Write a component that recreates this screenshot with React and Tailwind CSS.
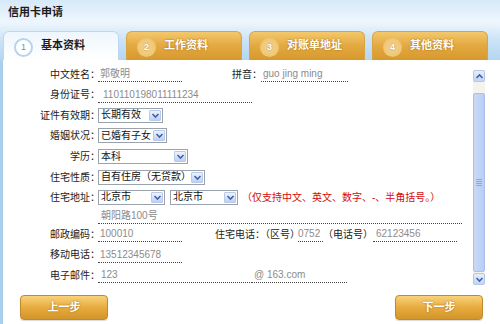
import React from 'react';

const tabs = [
  { no: '1', label: '基本资料' },
  { no: '2', label: '工作资料' },
  { no: '3', label: '对账单地址' },
  { no: '4', label: '其他资料' },
];

const Chevron = ({ up = false }) => (
  <svg width="9" height="7" viewBox="0 0 9 7">
    <polyline
      points={up ? '1.5,5 4.5,2 7.5,5' : '1.5,2 4.5,5 7.5,2'}
      fill="none"
      stroke="#3f63a8"
      strokeWidth="1.6"
    />
  </svg>
);

const Select = ({ w, value }) => (
  <div className={`relative flex h-[15px] items-center border border-[#9aa3ad] bg-white pl-[2px] text-[10px] leading-none text-[#111] ${w}`}>
    {value}
    <span className="absolute right-[1px] top-[1px] flex h-[11px] w-[12px] items-center justify-center rounded-[1px] border border-[#b9c9ea] bg-gradient-to-b from-[#eef3fd] to-[#bfd0f4]">
      <Chevron />
    </span>
  </div>
);

const Field = ({ w, value, className = '' }) => (
  <div className={`h-[16px] border-b border-dotted border-[#444] text-[10px] leading-[16px] text-[#8c8c8c] ${w} ${className}`}>
    {value}
  </div>
);

const Row = ({ h, label, children }) => (
  <div className={`flex items-center ${h}`}>
    <div className="w-[97px] text-right text-[10px] text-[#222]">{label}</div>
    <div className="-ml-[2px] flex items-center">{children}</div>
  </div>
);

const Button = ({ children }) => (
  <button className="flex h-[25px] w-[88px] items-center justify-center rounded-[4px] border border-[#c08a2a] bg-gradient-to-b from-[#f9d27a] via-[#e7ab3d] to-[#d2952b] text-[11px] font-bold text-white shadow-[0_1px_1px_rgba(0,0,0,0.15)] [text-shadow:0_0_2px_#a0680f]">
    {children}
  </button>
);

export default function App() {
  return (
    <div className="flex h-[324px] w-[500px] flex-col overflow-hidden bg-[linear-gradient(180deg,#d6e9f8_0px,#eef6fd_22px,#cbe3f7_40px,#b5d5f1_60px)] font-['Liberation_Sans','Noto_Sans_CJK_SC',sans-serif]">
      {/* Title */}
      <div className="h-[31px] pl-[8px] pt-[5px] text-[11px] font-bold leading-[14px] text-[#1a1a1a]">
        信用卡申请
      </div>

      {/* Tabs */}
      <div className="flex h-[29px] gap-[7px] pl-[3px]">
        {tabs.map((t, i) =>
          i === 0 ? (
            <div
              key={t.no}
              className="flex h-[29px] w-[116px] items-start gap-[8px] rounded-t-[6px] border border-b-0 border-[#bcd8f0] bg-gradient-to-b from-[#eef6fd] to-white pl-[10px]"
            >
              <span className="mt-[6px] flex h-[19px] w-[19px] items-center justify-center rounded-full border-2 border-[#b8d3ee] bg-white text-[9px] text-[#6f8fb4]">
                {t.no}
              </span>
              <span className="mt-[6px] text-[11px] font-bold leading-[14px] text-[#1d1d1d]">{t.label}</span>
            </div>
          ) : (
            <div
              key={t.no}
              className="flex h-[29px] w-[116px] items-start gap-[8px] rounded-t-[6px] border border-b-0 border-[#d7a444] bg-gradient-to-b from-[#f3c86c] via-[#e3a83f] to-[#d6992d] pl-[10px]"
            >
              <span className="mt-[6px] flex h-[19px] w-[19px] items-center justify-center rounded-full bg-[radial-gradient(circle,#f3d592_0%,#efc878_60%,#e8b757_100%)] text-[9px] font-bold text-white [text-shadow:0_0_2px_#b47a1a]">
                {t.no}
              </span>
              <span className="mt-[6px] text-[11px] font-bold leading-[14px] text-white [text-shadow:0_0_2px_#9a6510]">
                {t.label}
              </span>
            </div>
          )
        )}
      </div>

      {/* Body */}
      <div className="flex flex-1 flex-col border-l-[3px] border-[#a9cfef] bg-white">
        <div className="flex h-[229px]">
          <div className="flex flex-1 flex-col pt-[4px]">
            <Row h="h-[20px]" label="中文姓名：">
              <Field w="w-[84px]" value="郭敬明" className="pl-[2px]" />
              <span className="ml-[50px] text-[10px] text-[#222]">拼音：</span>
              <Field w="w-[87px]" value="guo jing ming" className="-ml-[1px] pl-[2px]" />
            </Row>
            <Row h="h-[21px]" label="身份证号：">
              <Field w="w-[154px]" value="110110198011111234" className="pl-[5px]" />
            </Row>
            <Row h="h-[20px]" label="证件有效期：">
              <Select w="w-[65px]" value="长期有效" />
            </Row>
            <Row h="h-[21px]" label="婚姻状况：">
              <Select w="w-[69px]" value="已婚有子女" />
            </Row>
            <Row h="h-[21px]" label="学历：">
              <Select w="w-[90px]" value="本科" />
            </Row>
            <Row h="h-[20px]" label="住宅性质：">
              <Select w="w-[107px]" value="自有住房（无贷款）" />
            </Row>
            <Row h="h-[20px]" label="住宅地址：">
              <Select w="w-[67px]" value="北京市" />
              <div className="ml-[5px]">
                <Select w="w-[68px]" value="北京市" />
              </div>
              <span className="ml-[4px] text-[10px] text-[#d20a0a]">（仅支持中文、英文、数字、-、半角括号。）</span>
            </Row>
            <Row h="h-[17px]" label="">
              <Field w="w-[364px]" value="朝阳路100号" className="pl-[3px]" />
            </Row>
            <Row h="h-[20px]" label="邮政编码：">
              <Field w="w-[84px]" value="100010" className="pl-[2px]" />
              <span className="ml-[33px] text-[10px] text-[#222]">住宅电话：（区号）</span>
              <Field w="w-[25px]" value="0752" className="-ml-[2px]" />
              <span className="text-[10px] text-[#222]">（电话号）</span>
              <Field w="w-[84px]" value="62123456" className="pl-[3px]" />
            </Row>
            <Row h="h-[21px]" label="移动电话：">
              <Field w="w-[84px]" value="13512345678" className="pl-[2px]" />
            </Row>
            <Row h="h-[20px]" label="电子邮件：">
              <Field w="w-[154px]" value="123" className="pl-[3px]" />
              <Field w="w-[95px]" value="@ 163.com" className="pl-[2px]" />
            </Row>
          </div>

          {/* Scrollbar */}
          <div className="mr-[15px] mt-[10px] flex h-[215px] w-[12px] flex-col bg-[#f4f4ef]">
            <div className="flex h-[12px] items-center justify-center rounded-[2px] border border-[#b4c6ea] bg-gradient-to-b from-[#e6eefc] to-[#c3d4f5]">
              <Chevron up />
            </div>
            <div className="h-[11px]" />
            <div className="flex flex-1 items-center justify-center rounded-[2px] border border-[#a9bfee] bg-gradient-to-r from-[#c9d9f8] to-[#b9cdf5]">
              <div className="flex flex-col gap-[1px]">
                <span className="h-px w-[6px] bg-[#8fa8dc]" />
                <span className="h-px w-[6px] bg-[#8fa8dc]" />
                <span className="h-px w-[6px] bg-[#8fa8dc]" />
                <span className="h-px w-[6px] bg-[#8fa8dc]" />
              </div>
            </div>
            <div className="h-[1px]" />
            <div className="flex h-[12px] items-center justify-center rounded-[2px] border border-[#b4c6ea] bg-gradient-to-b from-[#e6eefc] to-[#c3d4f5]">
              <Chevron />
            </div>
          </div>
        </div>

        {/* Buttons */}
        <div className="mt-[6px] flex justify-between pl-[17px] pr-[17px]">
          <Button>上一步</Button>
          <Button>下一步</Button>
        </div>
      </div>
    </div>
  );
}
